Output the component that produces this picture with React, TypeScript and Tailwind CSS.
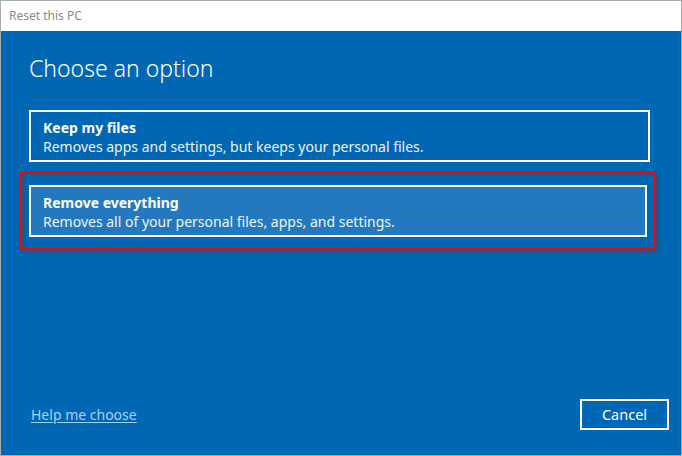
import React from "react";

const font = { fontFamily: '"Noto Sans", "Open Sans", sans-serif' };

type Option = {
  title: string;
  desc: string;
  selected?: boolean;
};

const options: Option[] = [
  { title: "Keep my files", desc: "Removes apps and settings, but keeps your personal files." },
  { title: "Remove everything", desc: "Removes all of your personal files, apps, and settings.", selected: true },
];

const OptionCard = ({ opt }: { opt: Option }) => (
  <div
    className={`h-[52px] border-2 border-white pl-[12px] pt-[6px] text-white ${
      opt.selected ? "bg-[#2479be]" : "bg-transparent"
    }`}
  >
    <p className="text-[14px] font-bold leading-[19px]">{opt.title}</p>
    <p className="text-[14px] leading-[20px] text-[#eef4fa]">{opt.desc}</p>
  </div>
);

export default function App() {
  return (
    <div
      className="flex h-[456px] w-[682px] flex-col border border-[#aaaaaa] bg-white"
      style={font}
    >
      {/* title bar */}
      <div className="flex h-[30px] shrink-0 items-center pl-[8px] text-[12px] text-[#8a8a8a]">
        Reset this PC
      </div>

      <div className="flex flex-1 flex-col bg-[#0067b4] pl-[19px] pr-[12px]">
        <h1 className="mt-[20px] pl-[9px] text-[23px] font-light leading-[34px] text-white">
          Choose an option
        </h1>

        <div className="mt-[25px] pl-[9px] pr-[19px]">
          <OptionCard opt={options[0]} />
        </div>

        {/* highlighted option */}
        <div className="mt-[9px] mr-[13px] border-2 border-[#ff0000] px-[7px] pt-[12px] pb-[11px] shadow-[3px_3px_2px_rgba(70,70,90,0.55),inset_3px_3px_2px_rgba(70,70,90,0.45)]">
          <OptionCard opt={options[1]} />
        </div>

        <div className="mt-auto mb-[25px] flex items-center justify-between pl-[11px]">
          <a className="text-[14px] text-[#a6d1f5] underline underline-offset-2" href="#">
            Help me choose
          </a>
          <button className="h-[31px] w-[89px] border-2 border-white text-[14.5px] text-white">
            Cancel
          </button>
        </div>
      </div>
    </div>
  );
}
